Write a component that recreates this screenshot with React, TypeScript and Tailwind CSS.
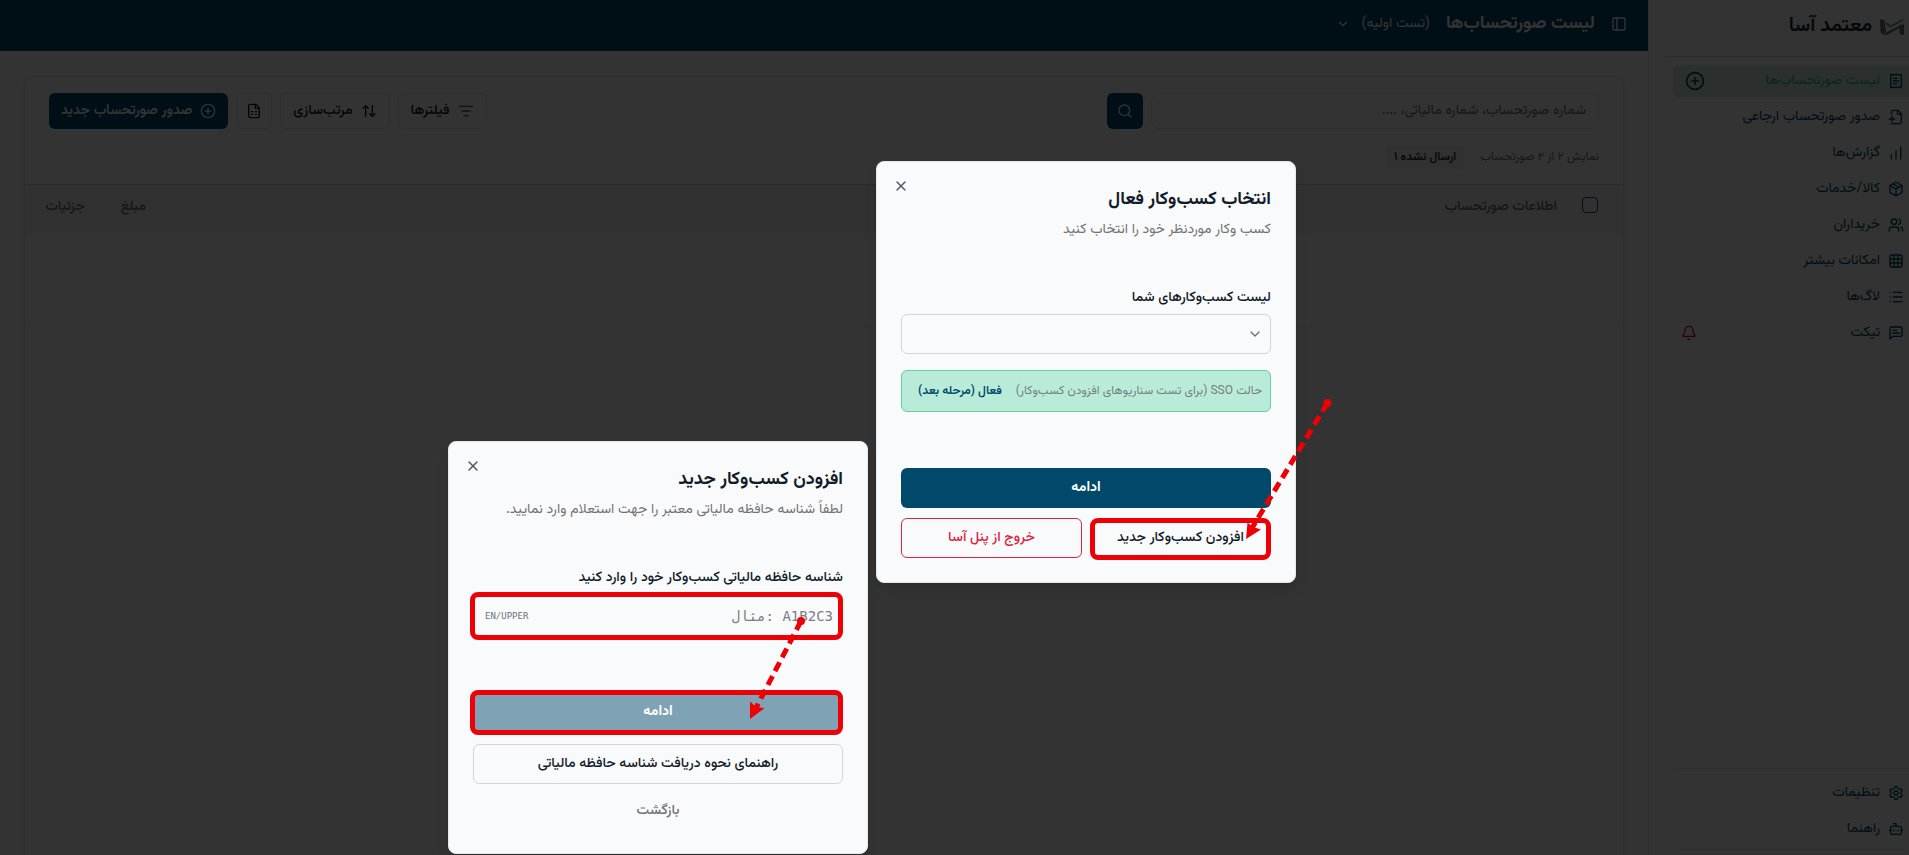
import type { ReactNode } from "react";
import {
  ArrowUpDown,
  Bell,
  Bot,
  ChartNoAxesColumnIncreasing,
  ChevronDown,
  CirclePlus,
  FileSpreadsheet,
  Grid3x3,
  List,
  ListFilter,
  Package,
  PanelLeft,
  ReceiptText,
  Search,
  Settings,
  Users,
  X,
} from "lucide-react";

function Logo() {
  return (
    <svg viewBox="0 0 24 17" className="h-[17px] w-6" fill="none">
      <path d="M0 1 4.5 2.5 6 13.5 3.5 17 0.5 14z" fill="#64748b" />
      <path d="M5 16.5 22 7.5" stroke="#64748b" strokeWidth="2.4" />
      <path d="M19.5 8 24 5.5V17l-4.5-1z" fill="#64748b" />
      <path d="M6 5 10.5 8.5 23.5 1.5" stroke="#34b98a" strokeWidth="1.6" />
    </svg>
  );
}

function ReturnInvoiceIcon() {
  return (
    <svg
      viewBox="0 0 24 24"
      className="size-4"
      fill="none"
      stroke="currentColor"
      strokeWidth="2"
      strokeLinecap="round"
      strokeLinejoin="round"
    >
      <path d="M5 22h13a2 2 0 0 0 2-2V7l-5-5H7a2 2 0 0 0-2 2v4" />
      <path d="M14 2v4a2 2 0 0 0 2 2h4" />
      <path d="M2 15h8" />
      <path d="M6 11v8" />
    </svg>
  );
}

function TicketIcon() {
  return (
    <svg
      viewBox="0 0 24 24"
      className="size-4"
      fill="none"
      stroke="currentColor"
      strokeWidth="2"
      strokeLinecap="round"
      strokeLinejoin="round"
    >
      <path d="M21 15a2 2 0 0 1-2 2H7l-4 4V5a2 2 0 0 1 2-2h14a2 2 0 0 1 2 2z" />
      <path d="M13 8H7" />
      <path d="M17 12H7" />
    </svg>
  );
}

const menu = [
  { label: "صدور صورتحساب ارجاعی", icon: <ReturnInvoiceIcon /> },
  {
    label: "گزارش‌ها",
    icon: <ChartNoAxesColumnIncreasing className="size-4" />,
  },
  { label: "کالا/خدمات", icon: <Package className="size-4" /> },
  { label: "خریداران", icon: <Users className="size-4" /> },
  { label: "امکانات بیشتر", icon: <Grid3x3 className="size-4" /> },
  { label: "لاگ‌ها", icon: <List className="size-4" /> },
];

function MenuLink({ label, icon }: { label: string; icon: ReactNode }) {
  return (
    <a href="#" className="flex h-8 items-center gap-2 pr-[5px]">
      {icon}
      {label}
    </a>
  );
}

function Sidebar() {
  return (
    <aside className="flex w-[261px] shrink-0 flex-col border-l border-gray-200 text-sm text-[#00496a]">
      <div className="ml-4 flex h-[57px] items-center gap-2 border-b border-gray-300 pr-[5px] pb-1">
        <Logo />
        <span className="text-xl font-semibold text-[#0c2a3e]">معتمد آسا</span>
      </div>

      <nav className="flex grow flex-col gap-1 pt-2 pl-6">
        <div className="flex items-center justify-between rounded-l-md bg-[#d5eee3] pl-3">
          <a
            href="#"
            className="flex h-8 items-center gap-2 pr-[5px] text-[#2ec48d]"
          >
            <ReceiptText className="size-4 text-[#00496a]" />
            لیست صورتحساب‌ها
          </a>
          <button aria-label="صورتحساب جدید">
            <CirclePlus className="size-5" />
          </button>
        </div>

        {menu.map((m) => (
          <MenuLink key={m.label} label={m.label} icon={m.icon} />
        ))}

        <div className="flex items-center justify-between pl-2">
          <MenuLink label="تیکت" icon={<TicketIcon />} />
          <Bell className="size-4 text-red-600" />
        </div>
      </nav>

      <div className="ml-6 flex flex-col gap-1 border-t border-gray-200 pt-2">
        <MenuLink label="تنظیمات" icon={<Settings className="size-4" />} />
        <MenuLink label="راهنما" icon={<Bot className="size-4" />} />
        <div className="mr-1.5 ml-2 h-1.5 border-t border-gray-200" />
      </div>
    </aside>
  );
}

function Toolbar() {
  return (
    <div className="px-6 pt-4 pb-[15px]">
      <div className="flex items-center justify-between">
        <div className="flex gap-2">
          <input
            aria-label="جستجو"
            placeholder="شماره صورتحساب، شماره مالیاتی، ...."
            className="h-9 w-[448px] rounded-lg border border-gray-200 px-3 text-sm placeholder:text-gray-500"
          />
          <button
            aria-label="جستجو"
            className="flex size-9 items-center justify-center rounded-md bg-[#00496a] text-white"
          >
            <Search className="size-4" />
          </button>
        </div>

        <div className="flex gap-2 text-sm font-medium text-gray-900">
          <button className="flex h-9 items-center gap-2 rounded-md border border-gray-200 px-3">
            <ListFilter className="size-4 text-gray-600" />
            فیلترها
          </button>
          <button className="flex h-9 items-center gap-2 rounded-md border border-gray-200 px-3">
            <ArrowUpDown className="size-4" />
            مرتب‌سازی
          </button>
          <button
            aria-label="خروجی اکسل"
            className="flex size-9 items-center justify-center rounded-md border border-gray-200"
          >
            <FileSpreadsheet className="size-4" />
          </button>
          <button className="flex h-9 items-center gap-2 rounded-md bg-[#00496a] px-3 font-semibold text-white">
            <CirclePlus className="size-4" />
            صدور صورتحساب جدید
          </button>
        </div>
      </div>

      <div className="mt-4 flex items-center gap-4 text-xs leading-6 text-gray-500">
        <span>نمایش ۲ از ۲ صورتحساب</span>
        <span className="rounded-sm bg-gray-100 px-2 font-medium text-gray-900">
          ارسال نشده ۱
        </span>
      </div>
    </div>
  );
}

function InvoiceTable() {
  return (
    <table className="w-full border-t border-gray-300 text-sm text-gray-500">
      <thead className="bg-gray-100">
        <tr className="h-12 text-right">
          <th className="w-[50px] pr-[25px] pb-2">
            <input
              type="checkbox"
              aria-label="انتخاب همه"
              className="block size-4 appearance-none rounded-sm border border-[#00496a]"
            />
          </th>
          <th className="px-4 pb-1 font-medium">اطلاعات صورتحساب</th>
          <th className="w-[61px] px-4 pb-1 font-medium">مبلغ</th>
          <th className="w-[76px] px-4 pb-1 font-medium">جزئیات</th>
        </tr>
      </thead>
      <tbody>
        <tr className="h-[94px] border-b border-gray-100">
          <td colSpan={4} />
        </tr>
      </tbody>
    </table>
  );
}

// red frame drawn over a control
function Highlight({ className }: { className: string }) {
  return (
    <span
      className={`pointer-events-none absolute rounded-lg border-[5px] border-[#ed0006] ${className}`}
    />
  );
}

function Dialog(props: {
  title: string;
  description: string;
  className: string;
  children: ReactNode;
}) {
  return (
    <section
      role="dialog"
      aria-label={props.title}
      className={`absolute w-[420px] rounded-lg border border-gray-200 bg-[#f9fafc] p-6 text-sm text-[#111c28] shadow-lg ${props.className}`}
    >
      <button
        aria-label="بستن"
        className="absolute top-4 left-4 text-gray-600"
      >
        <X className="size-4" />
      </button>
      <h2 className="text-lg leading-7 font-bold">{props.title}</h2>
      <p className="mt-1.5 leading-5 text-[#737373]">{props.description}</p>
      {props.children}
    </section>
  );
}

function SelectBusinessDialog() {
  return (
    <Dialog
      title="انتخاب کسب‌وکار فعال"
      description="کسب وکار موردنظر خود را انتخاب کنید"
      className="top-[161px] left-[876px]"
    >
      <label htmlFor="business" className="mt-12 block leading-5 font-medium">
        لیست کسب‌وکارهای شما
      </label>
      <div className="relative mt-1.5">
        <select
          id="business"
          className="h-10 w-full appearance-none rounded-md border border-gray-300 px-2"
        />
        <ChevronDown className="pointer-events-none absolute top-3 right-2 size-4 text-gray-500" />
      </div>

      <div className="mt-4 flex h-[42px] items-center gap-3.5 rounded-md border border-[#62d2a8] bg-[#b9ebd9] px-2 text-xs text-[#737f7b]">
        <span>حالت SSO (برای تست سناریوهای افزودن کسب‌وکار)</span>
        <button className="font-semibold text-[#00496a]">
          فعال (مرحله بعد)
        </button>
      </div>

      <button className="mt-14 h-10 w-full rounded-md bg-[#00496a] font-bold text-white">
        ادامه
      </button>
      <div className="mt-2.5 grid grid-cols-2 gap-2">
        <button className="relative h-10 rounded-md font-medium">
          افزودن کسب‌وکار جدید
          <Highlight className="inset-x-0 top-0 -bottom-0.5" />
        </button>
        <button className="h-10 rounded-md border border-[#dc2640] font-medium text-[#dc2640]">
          خروج از پنل آسا
        </button>
      </div>
    </Dialog>
  );
}

function AddBusinessDialog() {
  return (
    <Dialog
      title="افزودن کسب‌وکار جدید"
      description="لطفاً شناسه حافظه مالیاتی معتبر را جهت استعلام وارد نمایید."
      className="top-[441px] left-[448px]"
    >
      <label htmlFor="taxId" className="mt-12 block leading-5 font-medium">
        شناسه حافظه مالیاتی کسب‌وکار خود را وارد کنید
      </label>
      <div className="relative mt-1.5 font-['DejaVu_Sans_Mono',monospace]">
        <input
          id="taxId"
          dir="ltr"
          placeholder="مثال: A1B2C3"
          className="h-11 w-full pr-2.5 pl-20 text-right text-sm placeholder:text-[#7d7d80]"
        />
        <span className="absolute top-3 left-3 text-[9px] leading-5 text-gray-500">
          EN/UPPER
        </span>
        <Highlight className="-top-0.5 right-0 -bottom-0.5 -left-[3px]" />
      </div>

      <div className="relative mt-[54px]">
        <button
          disabled
          className="h-10 w-full rounded-md bg-[#7fa2b4] font-bold text-white"
        >
          ادامه
        </button>
        <Highlight className="-top-0.5 right-0 -bottom-[3px] -left-[3px]" />
      </div>
      <button className="mt-3 h-10 w-full rounded-md border border-gray-300 font-medium">
        راهنمای نحوه دریافت شناسه حافظه مالیاتی
      </button>
      <button className="mt-[9px] h-9 w-full font-medium text-[#737373]">
        بازگشت
      </button>
    </Dialog>
  );
}

function Arrows() {
  return (
    <svg
      className="pointer-events-none absolute inset-0 size-full"
      fill="#ed0006"
      stroke="none"
    >
      <circle cx="1327.5" cy="403" r="4" />
      <path
        d="M1327.5 403 1252 528"
        stroke="#ed0006"
        strokeWidth="5"
        strokeDasharray="10 5.5"
      />
      <path d="M1246 539 1247.5 522.5 1253 527 1261 529.5z" />
      <circle cx="801" cy="621" r="4" />
      <path
        d="M801 621 756 708"
        stroke="#ed0006"
        strokeWidth="5"
        strokeDasharray="10 5.5"
      />
      <path d="M750 719 750 701.5 756 707 764.5 708z" />
    </svg>
  );
}

export default function App() {
  return (
    <div
      dir="rtl"
      className="relative flex h-screen overflow-hidden bg-white font-[Vazirmatn,sans-serif]"
    >
      <Sidebar />

      <main className="flex min-w-0 grow flex-col">
        <header className="flex h-[51px] shrink-0 items-center gap-4 bg-[#00496a] px-[21px] pb-1 text-white">
          <button aria-label="نوار کناری">
            <PanelLeft className="size-4" />
          </button>
          <h1 className="text-lg font-bold">لیست صورتحساب‌ها</h1>
          <button className="flex items-center gap-3 text-sm">
            (تست اولیه)
            <ChevronDown className="size-3.5" />
          </button>
        </header>

        <div className="mx-6 mt-[25px] grow rounded-t-lg border border-b-0 border-gray-200 shadow-sm">
          <Toolbar />
          <InvoiceTable />
        </div>
      </main>

      <div className="absolute inset-0 bg-black/80">
        <SelectBusinessDialog />
        <AddBusinessDialog />
        <Arrows />
      </div>
    </div>
  );
}
